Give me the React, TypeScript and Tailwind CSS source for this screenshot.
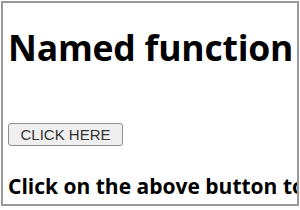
export default function App() {
  return (
    <div className="w-[300px] h-[210px] bg-white p-[1px]">
      <div className="h-[205px] w-[298px] overflow-hidden border-2 border-[#9a9a9a] bg-white px-[5px] font-['Open_Sans',sans-serif] text-black">
        <h1 className="mt-[21px] whitespace-nowrap text-[35.5px] font-bold leading-[46px] tracking-[-0.2px]">
          Named function
        </h1>
        <div className="mt-[52px]">
          <button className="h-[23px] w-[115px] rounded-[3px] border border-[#8f8f8f] bg-[#efefef] font-['Liberation_Sans',Arial,sans-serif] text-[15px] leading-none text-[#333]">
            CLICK HERE
          </button>
        </div>
        <p className="mt-[27px] whitespace-nowrap text-[21px] font-bold leading-[27px]">
          Click on the above button to
        </p>
      </div>
    </div>
  );
}
